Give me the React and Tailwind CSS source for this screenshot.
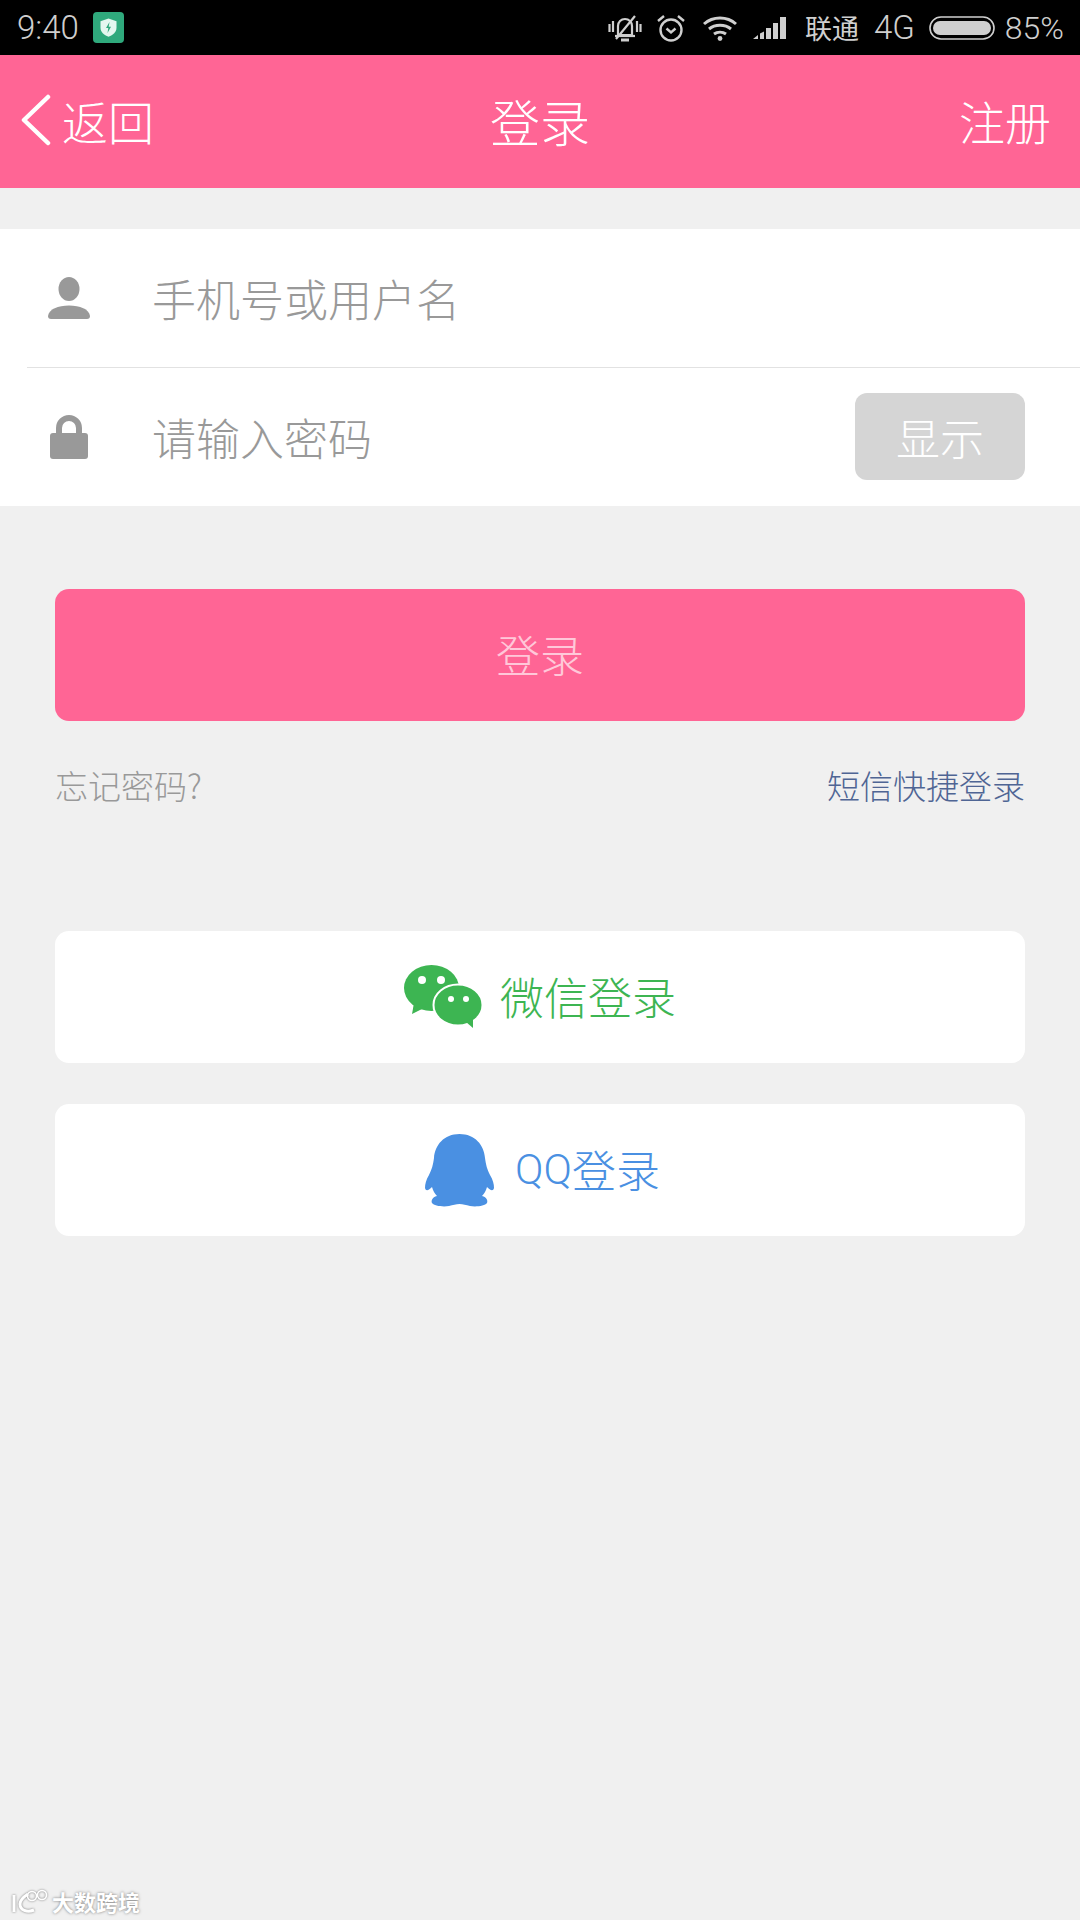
const font = { fontFamily: '"Noto Sans CJK SC", "Liberation Sans", sans-serif' };

function StatusBar() {
  return (
    <div className="h-[55px] bg-black flex items-center justify-between pl-[17px] pr-[16px] text-[#cfcfcf] font-['Roboto',sans-serif] font-light">
      <div className="flex items-center">
        <span className="text-[33px] leading-none">9:40</span>
        <svg viewBox="0 0 31 31" className="w-[31px] h-[31px] ml-[14px]">
          <rect width="31" height="31" rx="4" fill="#2fa97c" />
          <path d="M15.5 6.5l8 2.8v6.2c0 4.6-3.4 7.700-8 9.200-4.600-1.500-8-4.600-8-9.200V9.300z" fill="#e4f7ef" />
          <path d="M16.500 10l-3.500 6h2.300l-.8 5 3.500-6.200h-2.300z" fill="#2fa97c" />
        </svg>
      </div>
      <div className="flex items-center">
        <svg viewBox="0 0 34 28" className="w-[34px] h-[28px]" fill="none" stroke="#cfcfcf" strokeWidth="2.200">
          <path d="M10 21V12c0-4 3-7 7-7s7 3 7 7v9z" />
          <path d="M7 22h20" />
          <path d="M13 26h8" strokeWidth="3" />
          <path d="M8 25L27 2" />
          <path d="M1.500 10v8M5 7v11M29 7v11M32.500 10v8" />
        </svg>
        <svg viewBox="0 0 30 30" className="w-[30px] h-[30px] ml-[14px]" fill="none" stroke="#cfcfcf" strokeWidth="2.400">
          <circle cx="15" cy="17" r="10.500" />
          <path d="M10.500 15.500l4.500 4 4.500-4" />
          <path d="M2 8l6-5M28 8l-6-5" />
        </svg>
        <svg viewBox="0 0 36 26" className="w-[36px] h-[26px] ml-[16px]" fill="none" stroke="#cfcfcf" strokeWidth="3">
          <path d="M2 9c9-8 23-8 32 0" />
          <path d="M7 14c6-5 16-5 22 0" />
          <path d="M12 19c3.500-2.500 8.500-2.500 12 0" />
          <circle cx="18" cy="23.500" r="2.400" fill="#cfcfcf" stroke="none" />
        </svg>
        <svg viewBox="0 0 34 24" className="w-[34px] h-[24px] ml-[15px]" fill="#cfcfcf">
          <path d="M0 23l5-4v4zM7 17.500l4-2V23H7zM13 12h5v11h-5zM20 7h5v16h-5zM27 1h6v22h-6z" />
        </svg>
        <span className="text-[27px] leading-none ml-[18px] font-normal" style={font}>联通</span>
        <span className="text-[33px] leading-none ml-[15px]">4G</span>
        <svg viewBox="0 0 66 24" className="w-[66px] h-[24px] ml-[14px]" fill="none">
          <rect x="1" y="1" width="64" height="22" rx="11" stroke="#cfcfcf" strokeWidth="1.600" />
          <path d="M11 5h44a7 7 0 0 1 0 14H11a7 7 0 0 1 0-14z" fill="#cfcfcf" />
        </svg>
        <span className="text-[32px] leading-none ml-[10px]">85%</span>
      </div>
    </div>
  );
}

function Header() {
  return (
    <div className="h-[133px] bg-[#ff6595] flex items-center justify-between pl-[21px] pr-[29px] pb-[4px] text-white relative font-normal" style={font}>
      <div className="flex items-center">
        <svg viewBox="0 0 30 52" className="w-[30px] h-[52px]" fill="none" stroke="#fff" strokeWidth="4.500" strokeLinecap="round" strokeLinejoin="round">
          <path d="M27 3L3 26l24 23" />
        </svg>
        <span className="text-[46px] leading-none ml-[11px] font-light">返回</span>
      </div>
      <span className="absolute left-0 right-0 text-center text-[50px] leading-none font-light">登录</span>
      <span className="text-[46px] leading-none font-light">注册</span>
    </div>
  );
}

function Field({ icon, label, children }) {
  return (
    <div className="h-[138px] flex items-center relative">
      <div className="w-[152px] pl-[48px] flex shrink-0">{icon}</div>
      <span className="text-[44px] leading-none text-[#999999]">{label}</span>
      {children}
    </div>
  );
}

export default function App() {
  return (
    <div className="w-[1080px] h-[1920px] bg-[#f0f0f0] relative overflow-hidden font-light" style={font}>
      <StatusBar />
      <Header />

      <div className="mt-[41px] bg-white">
        <Field
          label="手机号或用户名"
          icon={
            <svg viewBox="0 0 42 42" className="w-[42px] h-[42px]" fill="#999">
              <ellipse cx="21" cy="12" rx="10.500" ry="12" />
              <path d="M0 39C1 32 10 28.500 21 28.500S41 32 42 39C42 41 41 42 39 42H3C1 42 0 41 0 39z" />
            </svg>
          }
        />
        <div className="h-px ml-[27px] bg-[#e2e2e2]" />
        <Field
          label="请输入密码"
          icon={
            <svg viewBox="0 0 38 44" className="w-[38px] h-[44px] ml-[2px]" fill="#999">
              <path d="M6 20v-7a13 13 0 0 1 26 0v7h-6v-7a7 7 0 0 0-14 0v7z" />
              <rect x="0" y="18" width="38" height="26" rx="3" />
            </svg>
          }
        >
          <div className="absolute right-[55px] top-[25px] w-[170px] h-[87px] rounded-[12px] bg-[#d5d5d5] flex items-center justify-center text-white text-[44px] leading-none">
            显示
          </div>
        </Field>
      </div>

      <div className="mx-[55px] mt-[83px] h-[132px] pb-[3px] rounded-[14px] bg-[#ff6595] flex items-center justify-center text-[#ffc8d9] text-[44px] leading-none">
        登录
      </div>

      <div className="mx-[55px] mt-[44px] flex items-center justify-between text-[33px] leading-[40px]">
        <span className="text-[#999999]">忘记密码?</span>
        <span className="text-[#4f6594]">短信快捷登录</span>
      </div>

      <div className="mx-[55px] mt-[126px] h-[132px] rounded-[14px] bg-white flex items-center justify-center">
        <svg viewBox="0 0 78 66" className="w-[78px] h-[66px] mt-[2px]">
          <ellipse cx="27.500" cy="23" rx="27.500" ry="23" fill="#3db552" />
          <path d="M10 38l-2 11 14-7z" fill="#3db552" />
          <circle cx="18" cy="15" r="4" fill="#fff" />
          <circle cx="37" cy="15" r="4" fill="#fff" />
          <ellipse cx="54" cy="40" rx="24.500" ry="20.500" fill="#3db552" stroke="#fff" strokeWidth="2" />
          <path d="M62 57l7 6 0-10z" fill="#3db552" />
          <circle cx="47" cy="34" r="3" fill="#fff" />
          <circle cx="62" cy="34" r="3" fill="#fff" />
        </svg>
        <span className="text-[44px] leading-none ml-[18px] pb-[3px] text-[#3db552]">微信登录</span>
      </div>

      <div className="mx-[55px] mt-[41px] h-[132px] rounded-[14px] bg-white flex items-center justify-center pl-[5px]">
        <svg viewBox="0 0 69 73" className="w-[69px] h-[73px]" fill="#4a90e2">
          <path d="M34.500 0C19 0 10 11 9 24C8 31 7 35 4 41C1 46 0 50 0 54C1 58 4 56 7 53C8 57 10 60 12 62C7 63 6 67 7 69C9 72 18 73 24 72C28 71 31 70 34.500 70C38 70 41 71 45 72C51 73 60 72 62 69C63 67 62 63 57 62C59 60 61 57 62 53C65 56 68 58 69 54C69 50 68 46 65 41C62 35 61 31 60 24C59 11 50 0 34.500 0z" />
        </svg>
        <span className="ml-[21px] flex items-center text-[#4a90e2]">
          <span className="text-[42px] leading-none font-['Roboto',sans-serif] font-light">QQ</span>
          <span className="text-[44px] leading-none pb-[3px]">登录</span>
        </span>
      </div>

      <div className="absolute left-[11px] bottom-[6px] flex items-center text-white text-[22px] leading-none font-bold [text-shadow:0_0_3px_#777]">
        <svg viewBox="0 0 38 26" className="w-[38px] h-[26px]" fill="none" stroke="#fff" strokeWidth="3" style={{ filter: "drop-shadow(0 0 1px #777)" }}>
          <path d="M3 7v17" />
          <path d="M17 6c-6 4-8 7-8 10 0 6 7 9 14 6" />
          <circle cx="21" cy="8" r="4.500" strokeWidth="1.600" />
          <circle cx="31" cy="7" r="4.500" strokeWidth="1.600" />
        </svg>
        <span className="ml-[3px]">大数跨境</span>
      </div>
    </div>
  );
}
